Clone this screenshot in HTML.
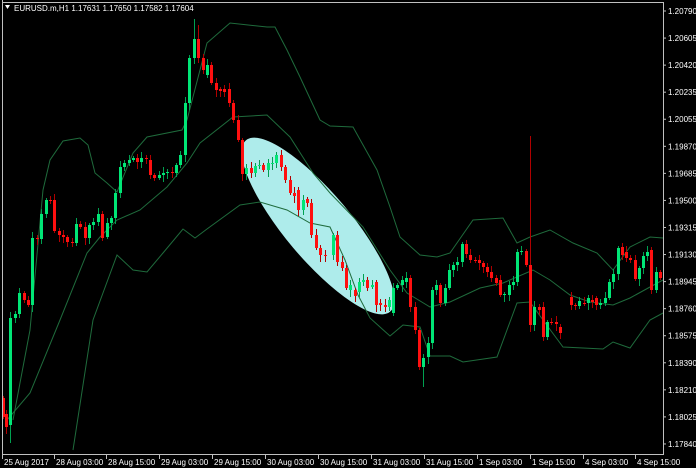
<!DOCTYPE html>
<html><head><meta charset="utf-8"><style>
html,body{margin:0;padding:0;background:#000;width:696px;height:468px;overflow:hidden}
svg text{font-family:"Liberation Sans",sans-serif;font-size:8px;fill:#fff}
</style></head><body>
<svg id="s" width="696" height="468" xmlns="http://www.w3.org/2000/svg">
<rect width="696" height="468" fill="#000"/>
<ellipse cx="318" cy="226" rx="112" ry="33" transform="rotate(50 318 226)" fill="#aeeceb"/>
<g fill="none" stroke="#1f6b3c" stroke-width="1">
<polyline points="13,420 30,330 43,190 50,160 63,141 80,138 88,145 95,173 107,183 117,192 133,153 147,137 182,130 187,120 207,43 230,23 267,27 275,27 287,50 300,77 320,120 330,126 353,127 377,170 390,207 400,237 420,255 437,257 450,253 473,220 503,218 517,243 530,237 550,230 573,243 597,253 613,270 630,247 650,237 663,238"/>
<polyline points="7,420 30,393 60,320 87,253 100,237 117,220 140,210 167,187 187,163 200,143 233,117 267,115 290,137 313,173 330,193 363,227 390,270 407,293 430,307 450,302 480,288 503,283 533,270 550,280 570,295 590,302 613,305 630,298 650,287 663,280"/>
<polyline points="73,450 93,320 117,255 133,270 147,272 163,253 183,229 195,238 207,229 240,205 260,202 287,210 310,223 330,227 345,260 358,295 370,318 390,336 403,325 420,327 430,356 450,356 463,362 497,357 517,303 530,302 543,320 563,347 603,349 613,342 630,348 650,320 663,313"/>
</g>
<g id="c"></g>
<g stroke="#c0c0c0" stroke-width="1" fill="none">
<polyline points="2.5,0 2.5,454.5 663.5,454.5 663.5,2.5 2.5,2.5"/>
</g>
<g id="ax"></g>
<text x="14" y="11">EURUSD.m,H1  1.17631 1.17650 1.17582 1.17604</text>
<polygon points="5,5 10,5 7.5,9" fill="#fff"/>
</svg>
<script>
var d=[[3,398,417],[6,414,427],[10,425,318],[15,318,314],[19,314,293],[24,293,300],[28,300,305],[32,305,238],[37,238,239],[41,239,214],[46,214,200],[50,200,201],[54,200,231],[59,231,235],[63,235,237],[67,237,242],[72,242,243],[76,243,224],[80,224,227],[85,227,238],[89,238,225],[93,225,222],[98,222,214],[102,214,238],[107,237,223],[111,223,218],[115,218,193],[120,193,167],[124,167,163],[129,163,160],[133,160,158],[137,158,162],[141,162,158],[146,158,159],[150,160,175],[154,175,178],[159,178,175],[163,175,173],[167,173,172],[172,172,173],[176,173,165],[180,165,155],[185,155,103],[189,103,58],[194,58,39],[198,39,58],[203,58,70],[207,75,65],[211,65,83],[216,83,90],[220,89,91],[224,89,92],[229,89,103],[233,103,120],[238,120,140],[242,140,174],[246,174,168],[251,168,173],[255,173,166],[259,166,165],[263,165,170],[268,170,163],[272,164,163],[276,163,155],[281,155,167],[285,167,180],[290,180,193],[294,193,196],[298,190,210],[303,210,200],[307,199,203],[311,203,235],[316,235,248],[320,248,255],[325,255,256],[333,255,235],[337,235,262],[342,262,268],[346,268,288],[350,290,285],[355,290,296],[359,292,282],[363,282,280],[367,280,288],[372,287,285],[376,282,305],[380,303,305],[385,305,307],[389,307,300],[393,313,288],[397,288,285],[402,285,280],[406,282,278],[410,278,307],[415,307,330],[419,330,367],[423,367,358],[428,357,343],[432,343,290],[436,290,285],[440,285,303],[445,303,288],[449,288,270],[453,270,265],[457,265,262],[462,262,244],[466,244,254],[470,255,260],[475,260,261],[479,260,263],[483,263,267],[487,267,272],[491,272,278],[496,278,283],[500,280,295],[504,295,294],[509,295,285],[513,285,282],[517,282,252],[521,252,251],[526,251,265],[530,265,325],[534,325,307],[539,307,310],[543,307,337],[547,337,322],[551,322,323],[556,322,324],[560,327,333],[571,297,305],[575,305,306],[579,306,301],[584,303,304],[588,303,298],[592,300,302],[596,298,305],[600,305,303],[605,303,298],[609,298,282],[613,282,274],[618,274,248],[622,247,255],[626,252,258],[630,258,260],[635,260,279],[639,279,268],[643,268,256],[647,256,252],[651,250,290],[656,290,272],[660,272,278]];
var h='';var ex={10:[0,12],185:[0,5],194:[15,0],198:[12,0],530:[125,0],423:[0,18]};
d.forEach(function(c,i){var x=c[0],o=c[1],cl=c[2];var up=cl<o;var col=up?'#00e676':'#ff1010';var t=Math.min(o,cl),b=Math.max(o,cl);var w=(i*7)%5+2;var hi=t-w-(ex[x]?ex[x][0]:0),lo=b+((i*5)%6)+2+(ex[x]?ex[x][1]:0);
h+='<line x1="'+(x+.5)+'" y1="'+hi+'" x2="'+(x+.5)+'" y2="'+lo+'" stroke="'+(up?'#00a050':'#b00000')+'"/>';
h+='<rect x="'+(x-1)+'" y="'+t+'" width="3" height="'+Math.max(1,b-t)+'" fill="'+col+'"/>';});
document.getElementById('c').innerHTML=h;
var a='';var p=['1.20790','1.20605','1.20420','1.20235','1.20055','1.19870','1.19685','1.19500','1.19315','1.19130','1.18945','1.18760','1.18575','1.18390','1.18210','1.18025','1.17840'];
p.forEach(function(v,i){var y=11+i*27.06;a+='<line x1="663" y1="'+y+'" x2="666" y2="'+y+'" stroke="#c0c0c0"/><text x="668" y="'+(y+3)+'">'+v+'</text>';});
var xl=[[3,'25 Aug 2017'],[55,'28 Aug 03:00'],[107,'28 Aug 15:00'],[160,'29 Aug 03:00'],[213,'29 Aug 15:00'],[266,'30 Aug 03:00'],[319,'30 Aug 15:00'],[372,'31 Aug 03:00'],[425,'31 Aug 15:00'],[478,'1 Sep 03:00'],[531,'1 Sep 15:00'],[584,'4 Sep 03:00'],[636,'4 Sep 15:00']];
xl.forEach(function(v){a+='<line x1="'+(v[0]-.5)+'" y1="455" x2="'+(v[0]-.5)+'" y2="459" stroke="#c0c0c0"/><text x="'+(v[0]+1)+'" y="465">'+v[1]+'</text>';});
document.getElementById('ax').innerHTML=a;
</script>
</body></html>
